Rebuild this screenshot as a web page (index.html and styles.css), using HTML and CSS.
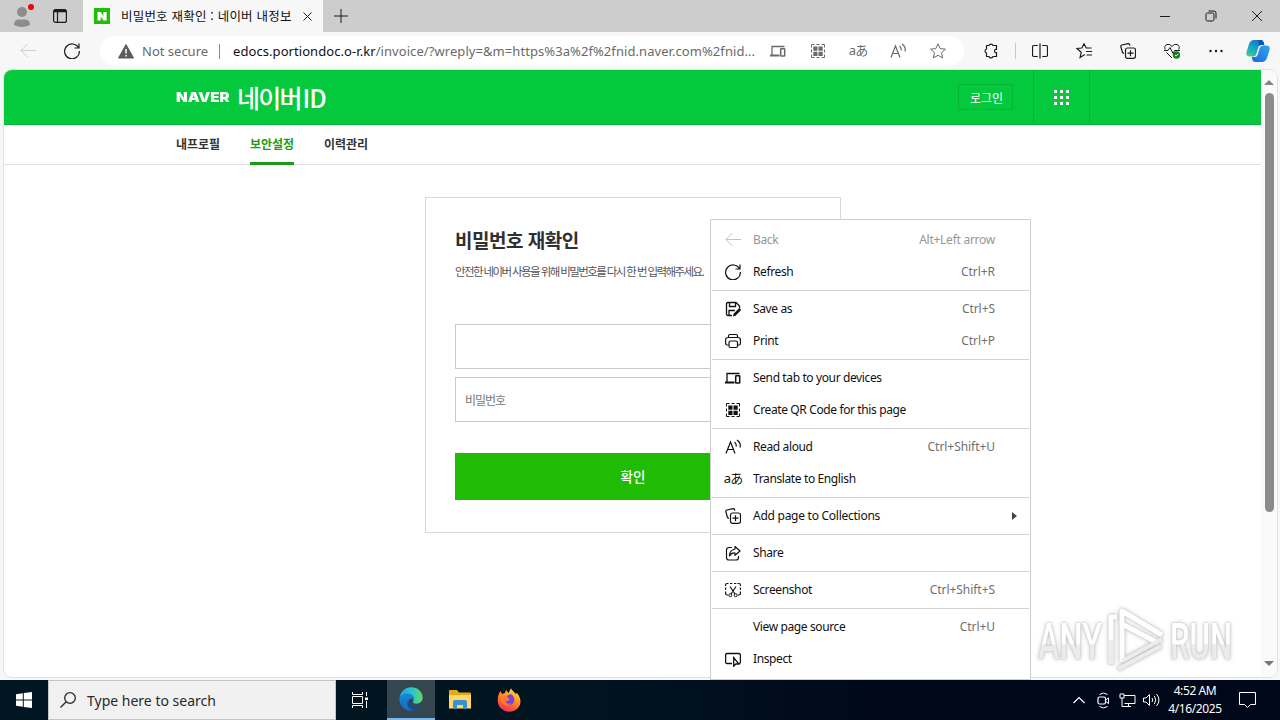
FILE: index.html
```html
<!DOCTYPE html>
<html lang="ko">
<head>
<meta charset="utf-8">
<title>비밀번호 재확인 : 네이버 내정보</title>
<link rel="stylesheet" href="styles.css">
</head>
<body>
<svg class="defs" aria-hidden="true">
  <symbol id="back" viewBox="0 0 16 16"><path d="M16 7.500H.8M7.500 1 1 7.500l6.500 6.500"/></symbol>
  <symbol id="refresh" viewBox="0 0 16 16"><path d="M14.600 5A7.400 7.400 0 1 0 15.400 8M15 .5V5h-4.500" stroke-width="1.200"/></symbol>
  <symbol id="devices" viewBox="0 0 16 16"><path d="M2 12V3.500H14.500" stroke-width="1.300"/><path d="M0 12.500h9.500" stroke-width="2"/><rect x="10.700" y="5.700" width="4" height="7.200" rx=".5" stroke-width="1.500"/></symbol>
  <symbol id="qr" viewBox="0 0 16 16"><path d="M1.500 4.500V1.500h3M11.500 1.500h3v3M14.500 11.500v3h-3M4.500 14.500h-3v-3M6.500 1.500h3M6.500 14.500h3M1.500 6.500v3M14.500 6.500v3"/><path d="M3.300 3.500h4.200v4.200H3.300zM8.500 3.500h4.200v4.200H8.500zM3.300 8.700h4.200v4.200H3.300zM8.500 8.700h4.200v4.200H8.500z" class="solid"/></symbol>
  <symbol id="read" viewBox="0 0 16 16"><path d="M1 14.500 5.500 3 10 14.500M2.600 10.500h5.800M9.500 3q2 1.500 1.800 4.500M12 1q4.300 3 3 7.500" stroke-width="1.200"/></symbol>
  <symbol id="coll" viewBox="0 0 16 16"><path d="M4 10.500 2.500 9.500.8 3.500Q.6 2.500 1.800 2L8 .6q1.500-.2 2 2" stroke-width="1.200"/><rect x="5.500" y="5" width="10" height="10.300" rx="2" stroke-width="1.200"/><path d="M10.500 7.200v6M7.500 10.200h6" stroke-width="1.200"/></symbol>
</svg>

<div class="browser">
  <div class="titlebar">
    <svg class="avatar" viewBox="0 0 28 26"><circle cx="10" cy="8" r="5"/><path d="M2 21q0-5.500 5-5.500h6q5 0 5 5.500-8 4-16 0z"/><circle cx="19" cy="3" r="3" class="dot"/></svg>
    <svg class="workspace" viewBox="0 0 14 14"><rect x=".6" y=".6" width="12.800" height="12.800" rx="2"/><path d="M1 2h12" stroke-width="2.600"/><path d="M4.500 3v10"/></svg>
    <div class="tab">
      <svg class="favicon" viewBox="0 0 16 16"><path d="M0 0h16v16H0z" fill="#1fbf05"/><path d="M3.500 4h3.200l2.700 4V4h3.200v8.500H9.400l-2.700-4v4H3.500z" fill="#fff"/></svg>
      <span class="tab-title">비밀번호 재확인 : 네이버 내정보</span>
      <svg class="tab-close" viewBox="0 0 9 9"><path d="m.5.5 8 8m0-8-8 8"/></svg>
    </div>
    <svg class="plus" viewBox="0 0 14 14"><path d="M7 0v14M0 7h14"/></svg>
    <div class="window-buttons">
      <svg viewBox="0 0 12 12"><path d="M1 6.500h10"/></svg>
      <svg viewBox="0 0 12 12"><rect x="1" y="3" width="8" height="8" rx="1.500"/><path d="M3.500 1H9q2 0 2 2v5.500"/></svg>
      <svg viewBox="0 0 12 12"><path d="m1 1 10 10M11 1 1 11"/></svg>
    </div>
  </div>

  <div class="toolbar">
    <svg class="ico nav-back"><use href="#back"/></svg>
    <svg class="ico nav-refresh"><use href="#refresh"/></svg>
    <div class="address">
      <svg class="warn" viewBox="0 0 16 15"><path d="M8 .5 15.500 14H.5z" fill="#5c5c5c" stroke="#5c5c5c" stroke-linejoin="round"/><path d="M8 5v4.500M8 11v1.500" stroke="#fff" stroke-width="1.500"/></svg>
      <span class="insecure">Not secure</span>
      <span class="addr-sep"></span>
      <span class="url"><b>edocs.portiondoc.o-r.kr</b>/invoice/?wreply=&amp;m=https%3a%2f%2fnid.naver.com%2fnid...</span>
      <span class="addr-icons">
        <svg class="ico"><use href="#devices"/></svg>
        <svg class="ico"><use href="#qr"/></svg>
        <span class="translate">aあ</span>
        <svg class="ico"><use href="#read"/></svg>
        <svg class="ico" viewBox="0 0 16 16"><path d="m8 .8 2.200 4.800 5.200.6-3.900 3.500 1.100 5.200L8 12.300l-4.600 2.600 1.100-5.200L.6 6.200l5.200-.6z"/></svg>
      </span>
    </div>
    <div class="tools">
      <svg class="ico" viewBox="0 0 16 16"><path d="M3.500 2.500H6a2.100 2.100 0 0 1 4 0h3.500v3.800h-.8a1.800 1.800 0 0 0 0 3.400h.8v3.800H10a2.100 2.100 0 0 1-4 0H3.500V10a2.100 2.100 0 0 1 0-4z" stroke-linejoin="round" stroke-width="1.200"/></svg>
      <span class="tool-sep"></span>
      <svg class="ico" viewBox="0 0 16 16"><path d="M8 .5v15M5.800 2.500H2q-1.500 0-1.500 1.500v8q0 1.500 1.500 1.500h3.800M10.200 2.500H14q1.500 0 1.500 1.500v8q0 1.500-1.500 1.500h-3.800" stroke-width="1.200"/></svg>
      <svg class="ico" viewBox="0 0 16 16"><path d="m8.800 11.500-4.700 3 1.100-5.200-4.300-3.800 5-.5L8 .8l2.300 4.200H15.500M10 8.500h6M10.500 12H16" stroke-width="1.200"/></svg>
      <svg class="ico"><use href="#coll"/></svg>
      <svg class="ico" viewBox="0 0 16 16"><path d="M1.200 6.500Q-.2 2.700 3 1.500 6 .5 8 3.500 10 .5 13 1.500q3.200 1.200 1.800 5M0 7.500h4l2-3 3 6 1.700-3H16M2.500 9.500 8 15"/><circle cx="12.500" cy="12" r="3.700" fill="#187b18" stroke="none"/><path d="m10.900 12 1.200 1.200 2.200-2.400" stroke="#fff"/></svg>
      <svg class="ico dots" viewBox="0 0 16 16"><circle cx="2.500" cy="8" r="1.200"/><circle cx="8" cy="8" r="1.200"/><circle cx="13.500" cy="8" r="1.200"/></svg>
      <svg class="copilot" viewBox="0 0 24 22">
        <defs>
          <linearGradient id="cpl" x1="0" y1="1" x2=".6" y2="0"><stop offset="0" stop-color="#55cf86"/><stop offset=".5" stop-color="#18a9c4"/><stop offset="1" stop-color="#1475cf"/></linearGradient>
          <linearGradient id="cpr" x1="0" y1="1" x2="1" y2="0"><stop offset="0" stop-color="#1b66e0"/><stop offset="1" stop-color="#31a8ef"/></linearGradient>
        </defs>
        <path d="M8 0h7q2 0 2.500 2l.8 3H15q-2 0-2.600 2l-2 7q-.8 2.500-3.400 2.500H3.500Q-.5 16.500.5 12L3 4Q4.500 0 8 0z" fill="url(#cpl)"/>
        <path d="M16 22H9q-2 0-2.500-2l-.8-3H9q2 0 2.600-2l2-7q.8-2.500 3.400-2.500h3.500q4 0 3 4.500l-2.500 8Q19.500 22 16 22z" fill="url(#cpr)"/>
        <path d="M12.300 0H15q2 0 2.500 2l.8 3H15q-1.200 0-2 .9z" fill="#0d57a8"/>
      </svg>
    </div>
  </div>

  <div class="viewport">
    <div class="page">
      <header class="site-header">
        <span class="naver">NAVER</span>
        <span class="naver-id">네이버<i>ID</i></span>
        <span class="login">로그인</span>
        <span class="apps"><svg viewBox="0 0 15 15"><path d="M0 0h3v3H0zM6 0h3v3H6zM12 0h3v3h-3zM0 6h3v3H0zM6 6h3v3H6zM12 6h3v3h-3zM0 12h3v3H0zM6 12h3v3H6zM12 12h3v3h-3z"/></svg></span>
      </header>
      <nav class="site-nav"><span>내프로필</span><span class="active">보안설정</span><span>이력관리</span></nav>
      <main class="card">
        <h1>비밀번호 재확인</h1>
        <p>안전한 네이버 사용을 위해 비밀번호를 다시 한 번 입력해주세요.</p>
        <div class="field"></div>
        <div class="field">비밀번호</div>
        <div class="confirm">확인</div>
      </main>
    </div>
    <div class="scrollbar"><i class="up"></i><i class="thumb"></i><i class="down"></i></div>
  </div>
</div>

<div class="taskbar">
  <div class="start"><svg viewBox="0 0 16 16"><path d="M0 2.200 6.800 1.200v6.300H0zM7.800 1.100 16 0v7.500H7.800zM0 8.500h6.800v6.300L0 13.800zM7.800 8.500H16V16l-8.200-1.100z"/></svg></div>
  <div class="search"><svg viewBox="0 0 16 16"><circle cx="10" cy="6" r="5.300"/><path d="M6.200 9.800.5 15.500"/></svg><span>Type here to search</span></div>
  <div class="task"><svg width="16" height="16" viewBox="0 0 16 16" class="line"><path d="M.5 0v2.500h10V0M.5 16v-2.500h10V16M.5 4.500h10v7H.5zM14.500 0v4M14.500 9v7"/><path d="M13 5.500h3v2.500h-3z" fill="#fff" stroke="none"/></svg></div>
  <div class="task open"><svg width="24" height="24" viewBox="0 0 24 24">
    <defs>
      <linearGradient id="ea" x1="0" y1="0" x2="1" y2="0"><stop offset="0" stop-color="#239fdf"/><stop offset=".55" stop-color="#2cc5d0"/><stop offset="1" stop-color="#66d957"/></linearGradient>
      <linearGradient id="eb" x1="0" y1="0" x2="0" y2="1"><stop offset="0" stop-color="#168bd5"/><stop offset="1" stop-color="#1769c3"/></linearGradient>
    </defs>
    <path d="M.5 11C1.500 4.500 6 .3 12 .3c7 0 11.700 5 11.700 10.200 0 4-3 6.200-6.200 6.200-2.800 0-4.200-1.200-3.500-2.200 2-3-.5-7-5-7C4.500 7.500 1.500 9 .5 11z" fill="url(#ea)"/>
    <path d="M.4 12C.7 8.500 4.500 6.500 8.700 6.500c4.500 0 6.800 3 6.300 6-2-2-5.500-.6-5.500 3 0 4 5 6 11.500 2.800-2 3.400-5.200 5.400-9 5.400C5.500 23.700.2 18.500.4 12z" fill="url(#eb)"/>
    <path d="M9.500 12.500c-3 4.500.5 11 6 10.600 2.600-1 4.300-2.800 5.500-4.800-6.500 3.200-11.500 1.200-11.500-2.800z" fill="#124b91"/>
  </svg></div>
  <div class="task"><svg width="22" height="20" viewBox="0 0 22 20"><path d="M0 1q0-1 1-1h7l2 2.500h11q1 0 1 1V18H0z" fill="#e8a71d"/><path d="M0 5h22v13.500H0z" fill="#ffd968"/><path d="M4 19v-7q0-2 2-2h10q2 0 2 2v7h-4v-4H8v4z" fill="#3b91d0"/></svg></div>
  <div class="task"><svg width="24" height="24" viewBox="0 0 24 24">
    <defs><linearGradient id="fx" x1=".8" y1="0" x2=".3" y2="1"><stop offset="0" stop-color="#ffe63e"/><stop offset=".45" stop-color="#ff9020"/><stop offset="1" stop-color="#f5275c"/></linearGradient></defs>
    <path d="M3.500 3 5 6l3-1 1-3 2.500 3L14 .2c1 2.500 3.500 3.800 5 6l.7-1.400c4.500 4.800 5 11 1.300 15.200-4.500 5-13 4.800-17.500 0C-.5 15.500 0 8 3.500 3z" fill="url(#fx)"/>
    <path d="M8 9.500c2-2.500 4-2 5.500-3.500 4.500 2.200 5 7.500 1.800 10-3.300 2.300-8 .3-8-3 2 1 4.200 0 5.200-1.500z" fill="#7a43d6"/>
    <path d="M5.500 8 9 7.500l3 3c-1 1.200-3 1-3.500 2.500 0 2.500 3 3.500 5.500 2.200-2.800 4-9.500 1.800-9.500-3z" fill="#ff7a29"/>
  </svg></div>
  <div class="tray">
    <svg width="12" height="12" viewBox="0 0 12 12"><path d="m.5 9 5.500-5.500L11.500 9" stroke-width="1.200"/></svg>
    <svg width="13" height="17" viewBox="0 0 13 17"><rect x="1" y="5" width="7.500" height="7" rx="1.500" stroke-width="1.200"/><path d="m8.500 8 3-2v5.500l-3-2M2.500 2.500q4-3 8 0M2.500 14.500q4 3 8 0"/></svg>
    <svg width="17" height="15" viewBox="0 0 17 15"><path d="M5 2.500h11v8H5.500M1 1h4v4H1zM3 5v8.500h9M9.500 10.500v3"/></svg>
    <svg width="17" height="14" viewBox="0 0 17 14"><path d="M.5 5H3l3.500-3.500v11L3 9H.5zM9 5q1.500 2 0 4M11.300 3q3 4 0 8M13.500 1q5 6 0 12"/></svg>
    <div class="clock"><span class="time">4:52 AM</span><span class="date">4/16/2025</span></div>
    <svg width="17" height="16" viewBox="0 0 17 16"><path d="M.5.5h16v12h-5l-3 3-3-3h-5z"/></svg>
  </div>
</div>

<div class="menu">
  <div class="item disabled"><svg class="ico"><use href="#back"/></svg><span>Back</span><kbd>Alt+Left arrow</kbd></div>
  <div class="item"><svg class="ico"><use href="#refresh"/></svg><span>Refresh</span><kbd>Ctrl+R</kbd></div>
  <hr>
  <div class="item"><svg class="ico" viewBox="0 0 16 16"><path d="M7 14.500H3Q1.500 14.500 1.500 13V3q0-1.500 1.500-1.500h8L14.500 5v2.500M4.500 1.500v4h6v-4M4 14V9.500h6" stroke-width="1.300"/><path d="m8 15.500.6-2.800 5-5q1-.8 1.900.2.800 1-.1 1.900l-4.900 5z" class="solid"/></svg><span>Save as</span><kbd>Ctrl+S</kbd></div>
  <div class="item"><svg class="ico" viewBox="0 0 16 16"><path d="M3.500 4.500V3q0-1.500 1.500-1.500h6q1.500 0 1.500 1.500v1.500M3.500 12H2Q.6 12 .6 10.500V7Q.6 4.500 3 4.500h10q2.400 0 2.400 2.500v3.500Q15.400 12 14 12h-1.500" stroke-width="1.200"/><rect x="4" y="8" width="8.500" height="6.500" rx="1.500" stroke-width="1.200"/></svg><span>Print</span><kbd>Ctrl+P</kbd></div>
  <hr>
  <div class="item"><svg class="ico"><use href="#devices"/></svg><span>Send tab to your devices</span></div>
  <div class="item"><svg class="ico"><use href="#qr"/></svg><span>Create QR Code for this page</span></div>
  <hr>
  <div class="item"><svg class="ico"><use href="#read"/></svg><span>Read aloud</span><kbd>Ctrl+Shift+U</kbd></div>
  <div class="item"><span class="translate">aあ</span><span>Translate to English</span></div>
  <hr>
  <div class="item"><svg class="ico"><use href="#coll"/></svg><span class="wide">Add page to Collections</span><i class="arrow"></i></div>
  <hr>
  <div class="item"><svg class="ico" viewBox="0 0 16 16"><path d="M7 2.500H4Q1.500 2.500 1.500 5v7.500Q1.500 15 4 15h7q2.500 0 2.500-2.500V11M10 1.500 15 6l-5 4.300V8Q6.500 7.500 4.500 11q0-6 5.500-7z" stroke-linejoin="round" stroke-width="1.200"/></svg><span>Share</span></div>
  <hr>
  <div class="item"><svg class="ico" viewBox="0 0 16 16"><path d="M.6 4V3Q.6 1.500 2 1.500h1.500M5 1.500h2.300M9 1.500h2.300M12.500 1.500H14q1.400 0 1.400 1.500v1M.6 5.500v2.300M15.400 5.500v2.300M.6 9.500v2q0 1.500 1.400 1.500h1M15.400 9.500v2q0 1.500-1.400 1.500h-1M5 4.500l5 7.500M11 4.500 6 12" stroke-width="1.200"/><circle cx="5.300" cy="13.200" r="1.500"/><circle cx="10.700" cy="13.200" r="1.500"/></svg><span>Screenshot</span><kbd>Ctrl+Shift+S</kbd></div>
  <hr>
  <div class="item"><span class="blank"></span><span>View page source</span><kbd>Ctrl+U</kbd></div>
  <div class="item"><svg class="ico" viewBox="0 0 16 16"><path d="M7 12.500H2Q.6 12.500.6 11V4Q.6 2.500 2 2.500h12q1.400 0 1.400 1.500v7q0 1.500-1.400 1.500M8.700 6.500v8.700l2.200-2.200h3z" stroke-width="1.300"/></svg><span>Inspect</span></div>
</div>

<svg class="watermark" viewBox="0 0 216 74">
  <defs>
    <linearGradient id="wm" x1="0" y1="0" x2="0" y2="1"><stop offset=".52" stop-color="#fff"/><stop offset=".56" stop-color="#ebebeb"/></linearGradient>
  </defs>
  <text x="4" y="53" textLength="64" lengthAdjust="spacingAndGlyphs" fill="url(#wm)">ANY</text>
  <text x="136" y="53" textLength="62" lengthAdjust="spacingAndGlyphs" fill="url(#wm)">RUN</text>
  <path d="M77 58V11h6M88 56V5l40 24M88 18l36 19" fill="none" stroke="#fff" stroke-width="5" stroke-linejoin="round"/>
  <path d="M88 55l40-22M84 63l43-23M77 58V34" fill="none" stroke="#ececec" stroke-width="4"/>
</svg>
</body>
</html>
```
FILE: styles.css
```css
* { box-sizing: border-box; }
body {
  margin: 0; width: 1280px; height: 720px; overflow: hidden; position: relative;
  display: flex; flex-direction: column;
  font: 12px "Noto Sans", "Noto Sans CJK KR", sans-serif; color: #1b1b1b; background: #f7f7f7;
}
svg { flex: none; display: block; fill: none; stroke: currentColor; }
.defs { width: 0; height: 0; position: absolute; }
.ico { width: 16px; height: 16px; }
.solid { fill: currentColor; stroke: none; }
.browser { height: 680px; display: flex; flex-direction: column; }

.titlebar { height: 32px; flex: none; display: flex; align-items: center; background: #cdcdcd; }
.avatar { width: 28px; height: 26px; margin: 2px 3px 0 12px; fill: #8d8d8d; stroke: none; }
.avatar .dot { fill: #e50909; }
.workspace { width: 14px; height: 14px; margin: 0 16px 0 10px; stroke-width: 1.200; }
.tab { width: 240px; height: 32px; padding-left: 11px; display: flex; align-items: center; background: #f7f7f7; }
.favicon { width: 16px; height: 16px; stroke: none; }
.tab-title { width: 178px; margin: -2px 0 0 11px; white-space: nowrap; color: #111; font: 12.500px "Noto Sans CJK KR", sans-serif; letter-spacing: .2px; }
.tab-close { width: 9px; height: 9px; margin-left: 4px; margin-top: 1px; }
.plus { width: 14px; height: 14px; margin-left: 11px; }
.window-buttons { margin-left: auto; display: flex; gap: 34px; padding-right: 17px; }
.window-buttons svg { width: 12px; height: 12px; }

.toolbar { height: 38px; flex: none; display: flex; align-items: center; padding-left: 20px; background: #f7f7f7; }
.nav-back { color: #cfcfcf; }
.nav-refresh { margin-left: 28px; }
.address { width: 864px; height: 30px; margin-left: 20px; padding-left: 18px; border-radius: 15px; background: #fff; display: flex; align-items: center; color: #6a6a6a; }
.warn { width: 16px; height: 15px; stroke: none; }
.insecure { width: 67px; margin-left: 8px; font-size: 13px; white-space: nowrap; }
.addr-sep { width: 1px; height: 15px; margin: 0 13px 0 10px; background: #8a8a8a; }
.url { width: 525px; font-size: 13px; white-space: nowrap; letter-spacing: .07px; }
.url b { font-weight: 400; color: #111; }
.addr-icons { margin-left: 12px; display: flex; gap: 24px; align-items: center; }
.translate { width: 16px; height: 16px; display: flex; flex: none; justify-content: center; white-space: nowrap; font: 13px/15px "Noto Sans", "Noto Sans CJK JP", sans-serif; letter-spacing: -1px; }
.tools { flex: 1; display: flex; align-items: center; padding-left: 19px; }
.tools .ico { margin-right: 28px; }
.tools .ico:first-child { margin-right: 16px; }
.tool-sep { width: 1px; height: 16px; margin-right: 16px; background: #c8c8c8; }
.tools .dots { margin-right: 22px; fill: #1b1b1b; stroke: none; }
.copilot { width: 24px; height: 22px; stroke: none; }

.viewport { width: 1273px; height: 607px; margin-left: 4px; display: flex; overflow: hidden; background: #fff; border-radius: 8px; box-shadow: 0 0 0 1px #e2e2e2; }
.page { width: 1257px; font-family: "Noto Sans CJK KR", sans-serif; }
.site-header { height: 55px; padding-left: 172px; display: flex; align-items: center; background: #04c93d; border-bottom: 1px solid #04b638; color: #fff; }
.naver { width: 54px; white-space: nowrap; font: 900 13.500px/20px Inter, sans-serif; transform: scaleX(1.120); transform-origin: left; }
.naver-id { width: 90px; margin-left: 7px; white-space: nowrap; font-size: 25px; line-height: 30px; font-weight: 500; letter-spacing: -1.800px; }
.naver-id i { font-style: normal; margin-left: 2px; letter-spacing: -1px; }
.login { width: 55px; height: 26px; margin-left: 631px; padding-left: 2px; border: 1px solid #04b437; font-size: 12px; line-height: 25px; text-align: center; }
.apps { width: 57px; height: 54px; margin-left: 20px; border: solid #04b437; border-width: 0 1px; display: grid; place-items: center; }
.apps svg { width: 15px; height: 15px; fill: #fff; stroke: none; }
.site-nav { height: 40px; padding-left: 172px; display: flex; gap: 30px; border-bottom: 1px solid #dedede; color: #333; font-size: 12px; font-weight: 700; line-height: 38px; }
.site-nav span { width: 44px; height: 40px; white-space: nowrap; }
.site-nav .active { color: #1f9a14; border-bottom: 3px solid #1f9a14; }
.card { width: 416px; height: 336px; margin: 32px 0 0 421px; padding: 28px 29px; border: 1px solid #d8d8d8; }
h1 { margin: 0; font-size: 19px; line-height: 28px; font-weight: 700; color: #303030; white-space: nowrap; letter-spacing: -.5px; }
p { margin: 7px 0 43px; font-size: 11.500px; line-height: 20px; color: #555; white-space: nowrap; letter-spacing: -1.600px; }
.field { height: 45px; margin-bottom: 8px; padding-left: 9px; border: 1px solid #c9c9c9; line-height: 44px; font-size: 12px; color: #777; letter-spacing: -1px; }
.confirm { height: 47px; margin-top: 31px; background: #20bc05; color: #fff; text-align: center; font-size: 13.500px; line-height: 46px; font-weight: 500; }
.scrollbar { width: 16px; display: flex; flex-direction: column; align-items: center; background: #fafafa; padding: 10px 0 11px; }
.up { border: solid transparent; border-width: 0 5px 5px; border-bottom-color: #858585; }
.thumb { width: 9px; height: 419px; margin-top: 8px; border-radius: 5px; background: #8b8b8b; }
.down { margin-top: auto; border: solid transparent; border-width: 5px 5px 0; border-top-color: #777; }

.taskbar { height: 40px; display: flex; background: linear-gradient(90deg, #001722, #001420 45%, #00081a 70%, #00081a); color: #fff; }
.start { width: 48px; display: grid; place-items: center; }
.start svg { width: 16px; height: 16px; fill: #fff; stroke: none; }
.search { width: 288px; padding-left: 11px; display: flex; align-items: center; gap: 11px; background: #f1f1f1; border: 1px solid #c4c4c4; color: #292929; font-size: 14px; white-space: nowrap; }
.search svg { width: 16px; height: 16px; stroke-width: 1.300; }
.task { width: 49px; display: grid; place-items: center; }
.task svg { stroke: none; }
.task .line { stroke: #fff; }
.search + .task { width: 51px; padding-right: 3px; }
.task.open { width: 48px; background: #34464f; border-bottom: 2px solid #76b9ed; }
.tray { margin-left: auto; display: flex; align-items: center; padding-right: 24px; }
.tray > svg { margin-right: 12px; }
.tray > svg:nth-of-type(2) { margin-right: 9px; }
.tray > svg:nth-of-type(3) { margin-right: 7px; }
.tray > svg:nth-of-type(4) { margin-right: 8px; }
.tray > svg:last-child { margin: 0 0 0 17px; }
.clock { width: 54px; display: flex; flex-direction: column; align-items: center; line-height: 18px; white-space: nowrap; margin-top: -1px; letter-spacing: -.4px; }

.menu { position: absolute; left: 710px; top: 219px; width: 321px; height: 461px; padding: 4px 1px; background: #fff; border: 1px solid #cecece; }
.item { height: 32px; padding: 0 34px 0 13px; display: flex; align-items: center; white-space: nowrap; color: #111; }
.item > span:nth-child(2) { margin: -2px 0 0 12px; letter-spacing: -.38px; }
.item > .wide:nth-child(2) { letter-spacing: -.26px; }
.item kbd { margin: -2px 0 0 auto; font: inherit; color: #707070; letter-spacing: -.05px; }
.item.disabled, .item.disabled kbd { color: #969696; }
.item.disabled kbd { letter-spacing: -.26px; }
.item.disabled .ico { color: #c2c2c2; }
.blank { width: 16px; }
.arrow { margin: 0 -22px 0 auto; border: solid transparent; border-width: 4px 0 4px 5px; border-left-color: #444; }
.menu hr { height: 1px; margin: 2px 0; border: 0; background: #d3d3d3; }

.watermark { position: absolute; left: 1034px; top: 606px; width: 216px; height: 74px; overflow: visible; stroke: none; font: 500 50px Roboto, sans-serif; filter: drop-shadow(0 0 1px #bbb) drop-shadow(0 0 2px #d5d5d5); }
```
